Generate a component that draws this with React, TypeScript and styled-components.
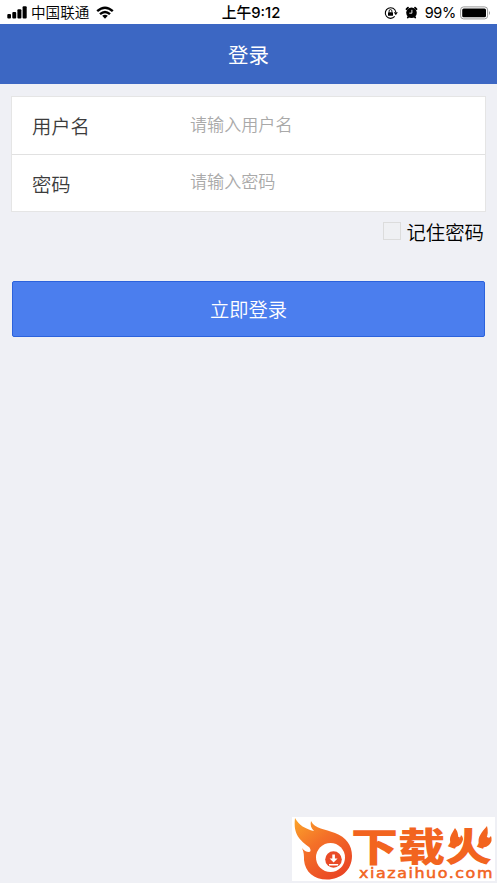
import React from "react";
import styled, { createGlobalStyle } from "styled-components";

const GlobalStyle = createGlobalStyle`
  * { box-sizing: border-box; }
  body {
    margin: 0;
    background: #eff0f5;
    font-family: "Inter", "Noto Sans CJK SC", sans-serif;
  }
`;

const Screen = styled.div`
  display: flex;
  flex-direction: column;
  height: 883px;
  overflow: hidden;
  background: #eff0f5;
`;

const StatusBar = styled.header`
  display: grid;
  grid-template-columns: 1fr auto 1fr;
  align-items: center;
  height: 24px;
  padding: 1px 6px 0 7px;
  background: #fff;
  color: #000;
  font-size: 14.6px;
  line-height: 22px;
  white-space: nowrap;
`;

const StatusGroup = styled.div<{ $end?: boolean }>`
  display: flex;
  align-items: center;
  justify-content: ${(p) => (p.$end ? "flex-end" : "flex-start")};
`;

const Carrier = styled.span`
  margin: 0 7px 0 4px;
  font-weight: 350;
`;

const Clock = styled.span`
  padding-left: 4px;
  font-size: 14.8px;
  font-weight: 500;
`;

const Percent = styled.span`
  margin: 0 4px 0 7px;
  font-size: 14.5px;
  letter-spacing: -0.3px;
`;

const TitleBar = styled.h1`
  display: flex;
  align-items: center;
  justify-content: center;
  flex: none;
  height: 60px;
  margin: 0;
  background: #3c67c3;
  color: #fff;
  font-size: 20.5px;
  font-weight: 400;
`;

const Form = styled.form`
  display: flex;
  flex-direction: column;
  padding: 12px 12px 0;
`;

const FieldGroup = styled.div`
  margin: 0 -1px;
  background: #fff;
  border: 1px solid #e5e5e5;
`;

const Field = styled.label`
  display: flex;
  align-items: center;
  height: 57px;
  padding-left: 20px;
  & + & {
    border-top: 1px solid #e1e1e1;
  }
`;

const FieldName = styled.span`
  width: 158px;
  padding-top: 1px;
  color: #3c3c3c;
  font-size: 19.3px;
  font-weight: 350;
`;

const FieldInput = styled.input`
  width: 250px;
  height: 30px;
  margin-bottom: 3px;
  padding: 0;
  border: 0;
  outline: 0;
  background: transparent;
  font-family: inherit;
  font-size: 17.1px;
  font-weight: 350;
  &::placeholder {
    color: #a9a9a9;
    opacity: 1;
  }
`;

const Remember = styled.label`
  display: flex;
  align-items: center;
  justify-content: flex-end;
  height: 38px;
  gap: 5px;
  padding-right: 1px;
  color: #000;
  font-size: 19.4px;
  font-weight: 350;
`;

const Checkbox = styled.input`
  appearance: none;
  width: 18px;
  height: 18px;
  margin: 0 0 1px;
  border: 1px solid #dcdcdc;
  background: #eff0f3;
`;

const LoginButton = styled.button`
  height: 56px;
  margin-top: 31px;
  padding: 0;
  border: 1px solid #2c62dc;
  border-radius: 2px;
  background: #4b7eee;
  color: #fff;
  font-family: inherit;
  font-size: 19.3px;
  font-weight: 350;
`;

const Watermark = styled.footer`
  display: flex;
  align-self: flex-end;
  width: 203px;
  height: 64px;
  margin: auto 2px 2px 0;
  background: #fff;
  color: #f2641f;
`;

const Wordmark = styled.div`
  display: flex;
  flex-direction: column;
  width: 143px;
`;

const BrandName = styled.div`
  position: relative;
  height: 50px;
  font-family: "Noto Sans CJK SC", sans-serif;
  font-size: 42px;
  font-weight: 900;
  line-height: 42px;
  white-space: nowrap;
`;

const Characters = styled.div`
  height: 42px;
  margin-top: 10px;
  transform: scale(1.12, 0.93);
  transform-origin: left top;
  translate: -1px -2px;
`;

const Flames = styled.svg`
  position: absolute;
  left: 96px;
  top: 9px;
`;

const Domain = styled.div`
  width: 120px;
  height: 14px;
  padding-left: 6px;
  font-family: "DejaVu Sans", sans-serif;
  font-size: 13.5px;
  line-height: 12px;
  letter-spacing: 1.3px;
  white-space: nowrap;
  transform: scaleX(1.18);
  transform-origin: left;
  -webkit-text-stroke: 0.5px #f2641f;
`;

const SignalIcon = () => (
  <svg width="20" height="13" viewBox="0 0 20 13">
    <rect x="0.3" y="8" width="3.7" height="4.4" rx="1" />
    <rect x="5.3" y="6" width="3.9" height="6.4" rx="1" />
    <rect x="10.4" y="3.3" width="4" height="9.1" rx="1" />
    <rect x="15.6" y="0.3" width="4.1" height="12.1" rx="1" />
  </svg>
);

const WifiIcon = () => (
  <svg width="18" height="14" viewBox="0 0 18 14">
    <path d="M1.2 5.2Q9 -1.8 16.8 5.2M4 8.1Q9 3.7 14 8.1" fill="none" stroke="#000" strokeWidth="2.4" />
    <path d="M6.2 9.8Q9 7.6 11.8 9.8L9 12.7Z" />
  </svg>
);

const RotationLockIcon = () => (
  <svg width="14" height="14" viewBox="0 0 14 14">
    <path d="M10.7 10.4A5.3 5.3 0 1 1 11.8 6" fill="none" stroke="#000" strokeWidth="1.1" />
    <path d="M9.8 6.2h4l-2 3z" />
    <rect x="4" y="6.2" width="5" height="3.6" rx=".5" />
    <path d="M5.1 6.4V5a1.4 1.4 0 0 1 2.8 0v1.4" fill="none" stroke="#000" strokeWidth=".9" />
  </svg>
);

const AlarmIcon = () => (
  <svg width="13" height="13" viewBox="0 0 13 13">
    <circle cx="6.5" cy="6.8" r="5.3" />
    <path d="M1.5 3.1 3 1.6M11.5 3.1 10 1.6M3.200 10.900l-.4.6M9.800 10.900l.4.6" fill="none" stroke="#000" strokeWidth="1.8" strokeLinecap="round" />
    <path d="M6.9 3.8v3.4H4.3" fill="none" stroke="#fff" strokeWidth=".9" />
  </svg>
);

const BatteryIcon = () => (
  <svg width="31" height="14" viewBox="0 0 31 14">
    <rect x=".6" y=".9" width="27" height="12" rx="3" fill="#fff" stroke="#999" />
    <rect x="2.2" y="2.5" width="23.8" height="8.8" rx="1.5" />
    <path d="M29 5q2 1.9 0 4z" fill="#999" />
  </svg>
);

const StatusIcons = styled.div`
  display: flex;
  gap: 7px;
`;

const FlameLogo = () => (
  <svg width="60" height="64" viewBox="0 0 60 64">
    <defs>
      <linearGradient id="flame" x1="0" y1="0" x2=".7" y2="1">
        <stop offset="0" stopColor="#fba52b" />
        <stop offset=".45" stopColor="#f47028" />
        <stop offset="1" stopColor="#ea4624" />
      </linearGradient>
    </defs>
    <path
      d="M3 1C7 8 13 12 22 14C19 11 18 8 19 4C23 12 33 12 43 16C54 20 60 28 60 39C60 53 49 62.500 35 62.500C22 62.500 13 55 12 43C12 39 12 35 10 31C12 33.500 14 35 17 35C19 35 19 32 17 30C8 23 1 18 3 1Z"
      fill="url(#flame)"
    />
    <circle cx="38.500" cy="40.500" r="14.500" fill="#fff" />
    <circle cx="41.500" cy="42.500" r="8.300" fill="#e94a26" />
    <path d="M40.3 37.500h2.600v4h2.700L41.600 45.500l-4-4h2.700zM37 47h9.200v1.500H37z" fill="#fff" />
  </svg>
);

export default function App() {
  return (
    <>
      <GlobalStyle />
      <Screen>
        <StatusBar>
          <StatusGroup>
            <SignalIcon />
            <Carrier>中国联通</Carrier>
            <WifiIcon />
          </StatusGroup>
          <Clock>上午9:12</Clock>
          <StatusGroup $end>
            <StatusIcons>
              <RotationLockIcon />
              <AlarmIcon />
            </StatusIcons>
            <Percent>99%</Percent>
            <BatteryIcon />
          </StatusGroup>
        </StatusBar>
        <TitleBar>登录</TitleBar>
        <Form onSubmit={(e) => e.preventDefault()}>
          <FieldGroup>
            <Field>
              <FieldName>用户名</FieldName>
              <FieldInput placeholder="请输入用户名" />
            </Field>
            <Field>
              <FieldName>密码</FieldName>
              <FieldInput type="password" placeholder="请输入密码" />
            </Field>
          </FieldGroup>
          <Remember>
            <Checkbox type="checkbox" />
            记住密码
          </Remember>
          <LoginButton type="submit">立即登录</LoginButton>
        </Form>
        <Watermark>
          <FlameLogo />
          <Wordmark>
            <BrandName>
              <Characters>下载火</Characters>
              <Flames width="46" height="26" viewBox="0 0 46 26">
                <path d="M7 2C4 8 0 11 3 18Q7 24 13 18Q17 12 13 9Q12 13 10 13Q11 7 7 2Z" fill="#f2641f" />
                <path d="M39 0C34 6 29 11 31 18Q35 24 41 19Q45 15 43 10Q41 13 38 13Q41 7 39 0Z" fill="#f2641f" />
              </Flames>
            </BrandName>
            <Domain>xiazaihuo.com</Domain>
          </Wordmark>
        </Watermark>
      </Screen>
    </>
  );
}
